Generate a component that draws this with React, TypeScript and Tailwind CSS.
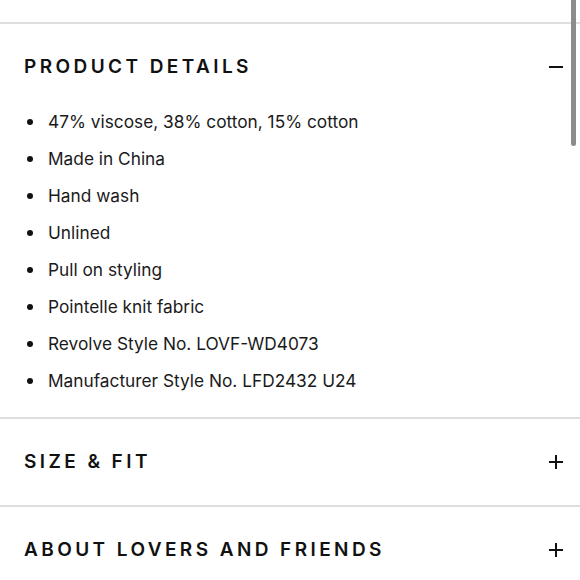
import type { ReactNode } from "react";

const details = [
  "47% viscose, 38% cotton, 15% cotton",
  "Made in China",
  "Hand wash",
  "Unlined",
  "Pull on styling",
  "Pointelle knit fabric",
  "Revolve Style No. LOVF-WD4073",
  "Manufacturer Style No. LFD2432 U24",
];

function Minus() {
  return <span className="block h-[2px] w-[14px] bg-[#111]" />;
}

function Plus() {
  return (
    <span className="relative block h-[14px] w-[14px]">
      <span className="absolute left-0 top-[6px] h-[2px] w-[14px] bg-[#111]" />
      <span className="absolute left-[6px] top-0 h-[14px] w-[2px] bg-[#111]" />
    </span>
  );
}

function SectionHeader({
  title,
  icon,
  open = false,
}: {
  title: string;
  icon: ReactNode;
  open?: boolean;
}) {
  return (
    <div
      className={
        open
          ? "flex h-[79px] items-center justify-between pl-6 pr-[17px] pt-[7px]"
          : "flex h-[86px] items-center justify-between pl-6 pr-[17px]"
      }
    >
      <h2 className="text-[19px] font-semibold uppercase leading-[22px] tracking-[0.18em] text-[#111]">
        {title}
      </h2>
      {icon}
    </div>
  );
}

export default function App() {
  return (
    <div
      className="relative min-h-[580px] w-full bg-white"
      style={{ fontFamily: "Inter, 'Noto Sans', sans-serif" }}
    >
      {/* scrollbar thumb over the page edge */}
      <div className="absolute right-[4px] top-0 h-[146px] w-[5px] rounded-b-full bg-[#8c8c8c]" />

      <div className="h-[22px]" />

      <section className="border-t-2 border-[#dedede]">
        <SectionHeader title="Product Details" icon={<Minus />} open />
        <ul className="pb-[18px] pl-6">
          {details.map((item) => (
            <li
              key={item}
              className="flex h-[37px] items-center gap-[15px] text-[17.3px] text-[#1a1a1a]"
            >
              <span className="ml-[3px] block h-[6px] w-[6px] rounded-full bg-[#111]" />
              {item}
            </li>
          ))}
        </ul>
      </section>

      <section className="border-t-2 border-[#dedede]">
        <SectionHeader title="Size & Fit" icon={<Plus />} />
      </section>

      <section className="border-t-2 border-[#dedede]">
        <SectionHeader title="About Lovers and Friends" icon={<Plus />} />
      </section>
    </div>
  );
}
